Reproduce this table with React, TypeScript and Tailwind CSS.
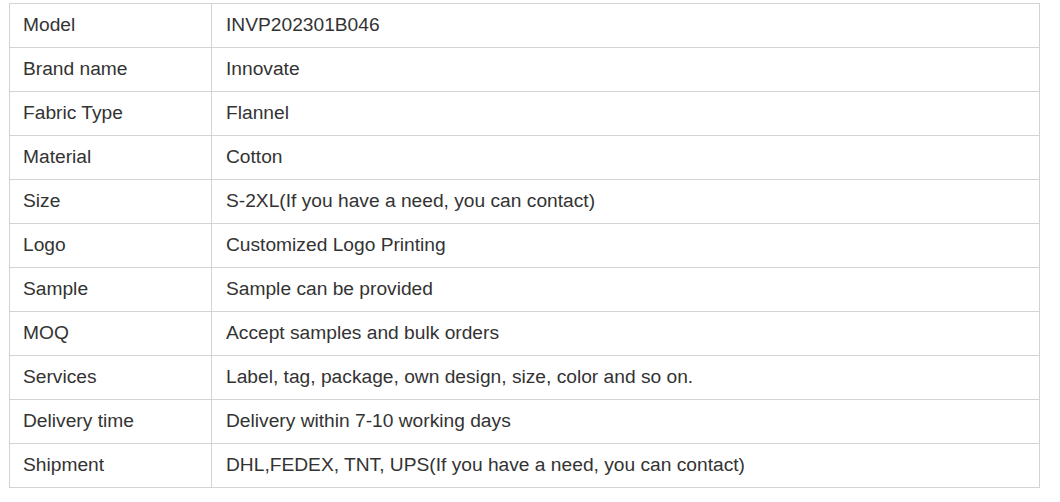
const rows: [string, string][] = [
  ['Model', 'INVP202301B046'],
  ['Brand name', 'Innovate'],
  ['Fabric Type', 'Flannel'],
  ['Material', 'Cotton'],
  ['Size', 'S-2XL(If you have a need, you can contact)'],
  ['Logo', 'Customized Logo Printing'],
  ['Sample', 'Sample can be provided'],
  ['MOQ', 'Accept samples and bulk orders'],
  ['Services', 'Label, tag, package, own design, size, color and so on.'],
  ['Delivery time', 'Delivery within 7-10 working days'],
  ['Shipment', 'DHL,FEDEX, TNT, UPS(If you have a need, you can contact)'],
];

export default function App() {
  return (
    <div className="w-[1060px] h-[502px] bg-white pt-[3px] pl-[9px]" style={{ fontFamily: '"Liberation Sans", Arial, sans-serif' }}>
      <div className="grid grid-cols-[202px_828px] w-[1031px] border-l border-t border-[#d3d3d3] text-[19.2px] text-[#333]">
        {rows.map(([label, value]) => (
          <div key={label} className="contents">
            <div className="h-[44px] flex items-center pl-[13px] border-r border-b border-[#d3d3d3]">{label}</div>
            <div className="h-[44px] flex items-center pl-[14px] border-r border-b border-[#d3d3d3]">{value}</div>
          </div>
        ))}
      </div>
    </div>
  );
}
